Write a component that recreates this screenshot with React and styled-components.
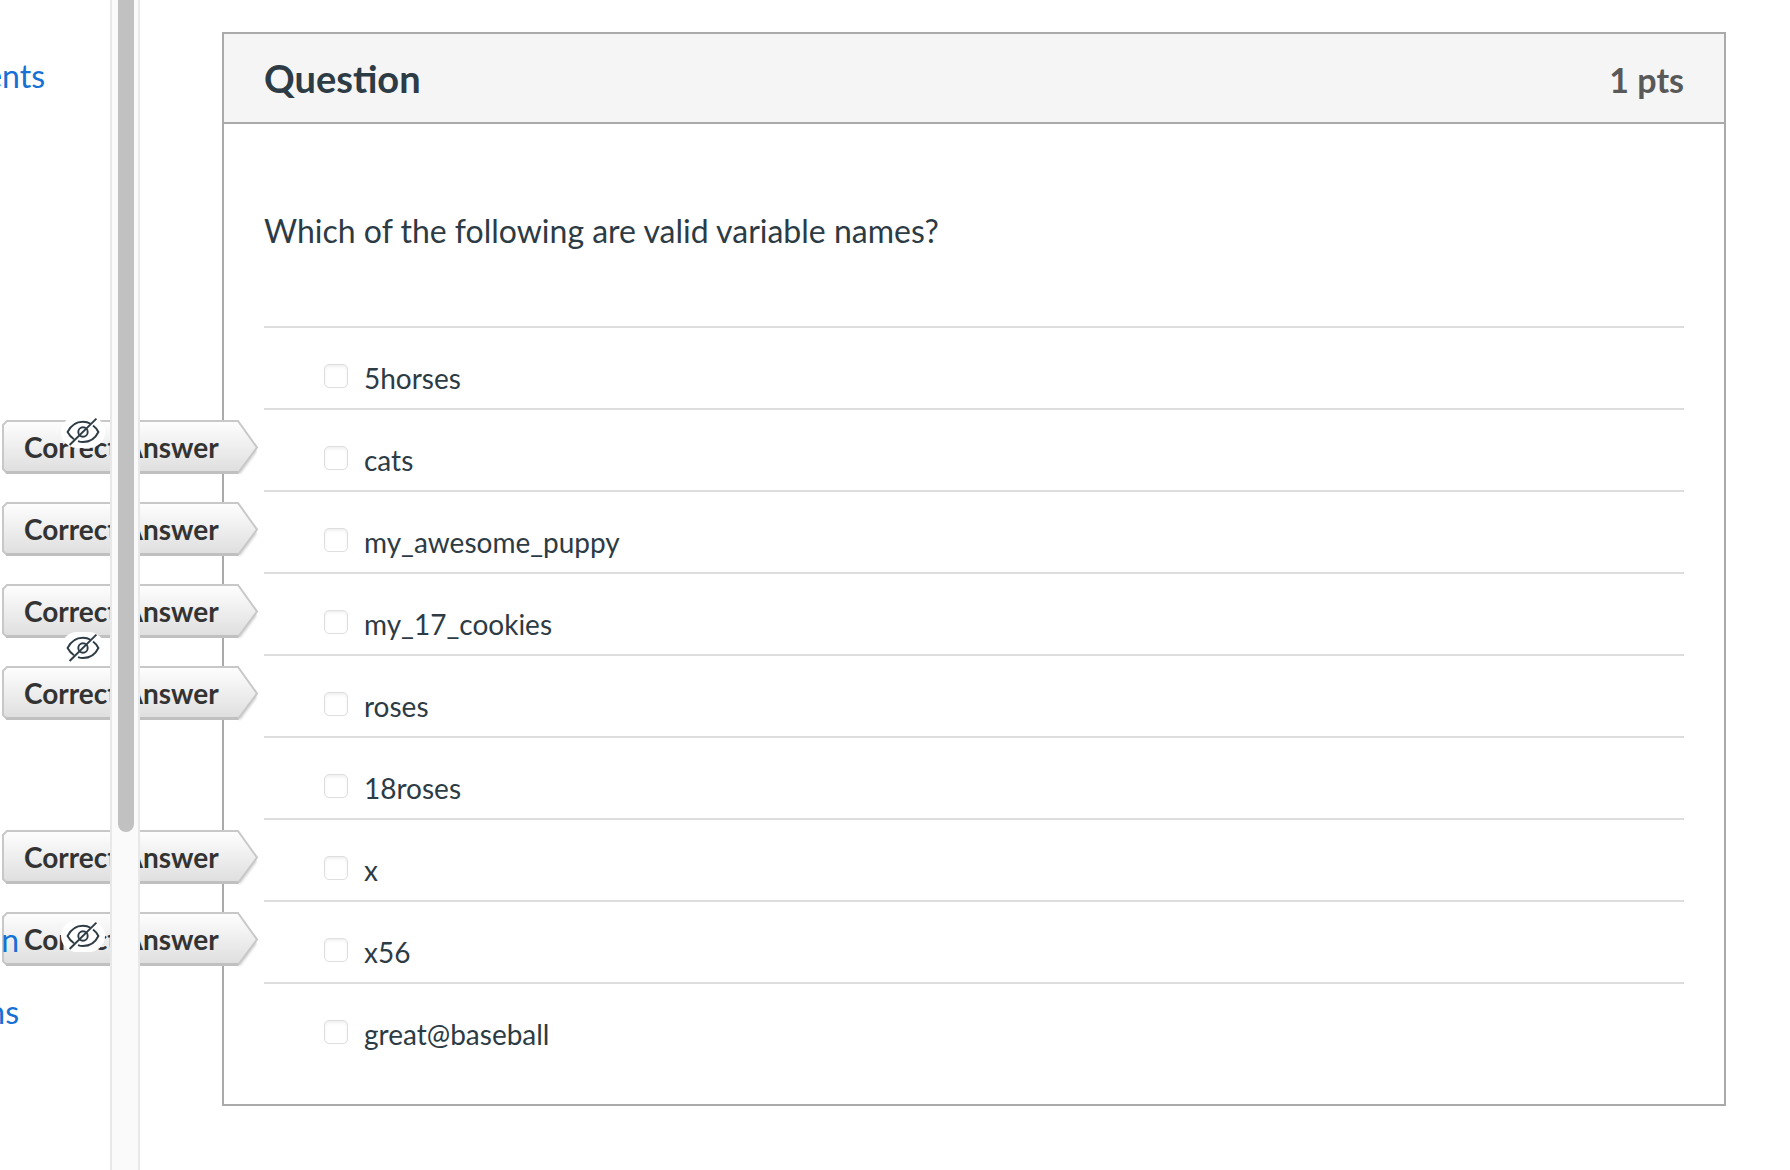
import React from "react";
import styled, { createGlobalStyle } from "styled-components";

const GlobalStyle = createGlobalStyle`
  *, *::before, *::after { box-sizing: border-box; }
  body {
    margin: 0;
    background: #fff;
    color: #2d3b45;
    font-family: Lato, "Liberation Sans", sans-serif;
  }
`;

const Page = styled.div`
  display: flex;
  min-height: 100vh;
  overflow: hidden;
`;

const CourseNav = styled.nav`
  position: relative;
  z-index: 2;
  flex: none;
  width: 110px;
  padding-top: 40px;
  overflow: hidden;
`;

const NavList = styled.ul`
  margin: 0;
  padding: 0;
  list-style: none;
`;

const NavItem = styled.li`
  display: flex;
  align-items: center;
  justify-content: space-between;
  height: 72px;
  padding-right: 5px;
`;

const NavLink = styled.a`
  display: flex;
  justify-content: flex-end;
  width: ${(p) => p.$end}px;
  color: #1770d4;
  font-size: 32px;
  line-height: 72px;
  text-decoration: none;
`;

const HiddenBadge = styled.span`
  display: flex;
  align-items: center;
  justify-content: center;
  width: 44px;
  height: 32px;
  margin: 0 0 8px auto;
  border-radius: 16px;
  background: #fff;
  color: #2d3b45;
`;

const ScrollTrack = styled.div`
  position: relative;
  z-index: 2;
  display: flex;
  flex: none;
  justify-content: center;
  align-items: flex-start;
  width: 30px;
  border: solid #e8e8e8;
  border-width: 0 2px;
  background: #fafafa;
`;

const ScrollThumb = styled.div`
  width: 16px;
  height: 832px;
  margin-left: 2px;
  border-radius: 0 0 8px 8px;
  background: #c1c1c1;
`;

const Content = styled.main`
  flex: 1;
  min-width: 0;
  padding: 32px 64px 64px 82px;
`;

const QuestionCard = styled.section`
  border: 2px solid #aaa;
`;

const CardHeader = styled.header`
  display: flex;
  align-items: baseline;
  justify-content: space-between;
  height: 90px;
  padding: 20px 40px 0;
  border-bottom: 2px solid #aaa;
  background: #f5f5f5;
`;

const Title = styled.h2`
  margin: 0;
  font-size: 38px;
  line-height: 48px;
`;

const Points = styled.span`
  color: #595959;
  font-size: 34px;
  font-weight: 700;
  line-height: 48px;
`;

const CardBody = styled.div`
  padding: 80px 40px 40px;
`;

const Prompt = styled.p`
  margin: 0 0 68px;
  font-size: 32px;
  line-height: 54px;
`;

const AnswerList = styled.div`
  display: flex;
  flex-direction: column;
`;

const AnswerRow = styled.div`
  position: relative;
  height: 82px;
  padding: 32px 60px 0;
  border-top: 2px solid #ddd;
`;

const AnswerLabel = styled.label`
  display: inline-flex;
  gap: 16px;
  font-size: 28px;
  line-height: 36px;
`;

const Checkbox = styled.input`
  appearance: none;
  flex: none;
  width: 24px;
  height: 24px;
  margin: 4px 0 0;
  border: 1px solid #dedede;
  border-radius: 5px;
  background: #fff;
  box-shadow: inset 0 2px 3px #f0f0f0;
  &:checked { background: #2d3b45; }
`;

const FlagBox = styled.div`
  position: absolute;
  z-index: 1;
  top: 10px;
  left: -262px;
  display: grid;
  align-items: start;
  width: 258px;
  height: 56px;
  > * { grid-area: 1 / 1; }
`;

const FlagText = styled.span`
  position: relative;
  padding-left: 22px;
  color: #333;
  font-size: 28px;
  font-weight: 700;
  line-height: 54px;
`;

function HiddenIcon() {
  return (
    <svg width="34" height="30" viewBox="0 0 34 30" fill="none" stroke="currentColor" strokeWidth="1.9" aria-hidden="true">
      <path d="M24.5 6.8C22.4 5.4 19.8 4.7 17 4.7 10 4.7 4.4 9.2 1.6 15 3.3 18.3 5 20.3 8 22.3" />
      <path d="M27 8.6C29.3 10.3 31 12.3 32.4 15 29.5 21 24 25 17 25c-1.8 0-3.4-.3-5-.9" />
      <circle cx="17" cy="15" r="4.7" />
      <path d="M30.4 1.6 3.6 28" />
    </svg>
  );
}

function CorrectFlag() {
  return (
    <FlagBox>
      <svg width="258" height="56" viewBox="0 0 258 56" fill="none" aria-hidden="true">
        <defs>
          <linearGradient id="flagFace" x1="0" y1="0" x2="0" y2="1">
            <stop offset="0" stopColor="#fefefe" />
            <stop offset="1" stopColor="#dedede" />
          </linearGradient>
          <filter id="flagShadow" x="-5%" y="-10%" width="110%" height="125%">
            <feGaussianBlur stdDeviation="1" />
          </filter>
        </defs>
        <path d="M237 53 254 30" stroke="#000" strokeOpacity=".18" strokeWidth="3" filter="url(#flagShadow)" />
        <path d="M5 1H236L255 27.500 236 53H5L1 49V5z" fill="url(#flagFace)" stroke="#c8c8c8" strokeWidth="2" />
        <path d="M4 52.500H236" stroke="#c0c0c0" strokeWidth="3" />
      </svg>
      <FlagText>Correct Answer</FlagText>
    </FlagBox>
  );
}

const navItems = [
  { text: "ents", end: 45 },
  {}, {}, {}, {},
  { hidden: true },
  {}, {},
  { hidden: true },
  {}, {}, {},
  { text: "n", end: 19, hidden: true },
  { text: "ns", end: 19 },
];

const answers = [
  { text: "5horses" },
  { text: "cats", correct: true },
  { text: "my_awesome_puppy", correct: true },
  { text: "my_17_cookies", correct: true },
  { text: "roses", correct: true },
  { text: "18roses" },
  { text: "x", correct: true },
  { text: "x56", correct: true },
  { text: "great@baseball" },
];

export default function App() {
  return (
    <>
      <GlobalStyle />
      <Page>
        <CourseNav>
          <NavList>
            {navItems.map((item, i) => (
              <NavItem key={i}>
                {item.text && <NavLink href="#" $end={item.end}>{item.text}</NavLink>}
                {item.hidden && <HiddenBadge><HiddenIcon /></HiddenBadge>}
              </NavItem>
            ))}
          </NavList>
        </CourseNav>
        <ScrollTrack><ScrollThumb /></ScrollTrack>
        <Content>
          <QuestionCard>
            <CardHeader>
              <Title>Question</Title>
              <Points>1 pts</Points>
            </CardHeader>
            <CardBody>
              <Prompt>Which of the following are valid variable names?</Prompt>
              <AnswerList>
                {answers.map((a, i) => (
                  <AnswerRow key={a.text}>
                    {a.correct && <CorrectFlag />}
                    <AnswerLabel htmlFor={`answer-${i}`}>
                      <Checkbox type="checkbox" id={`answer-${i}`} />
                      {a.text}
                    </AnswerLabel>
                  </AnswerRow>
                ))}
              </AnswerList>
            </CardBody>
          </QuestionCard>
        </Content>
      </Page>
    </>
  );
}
